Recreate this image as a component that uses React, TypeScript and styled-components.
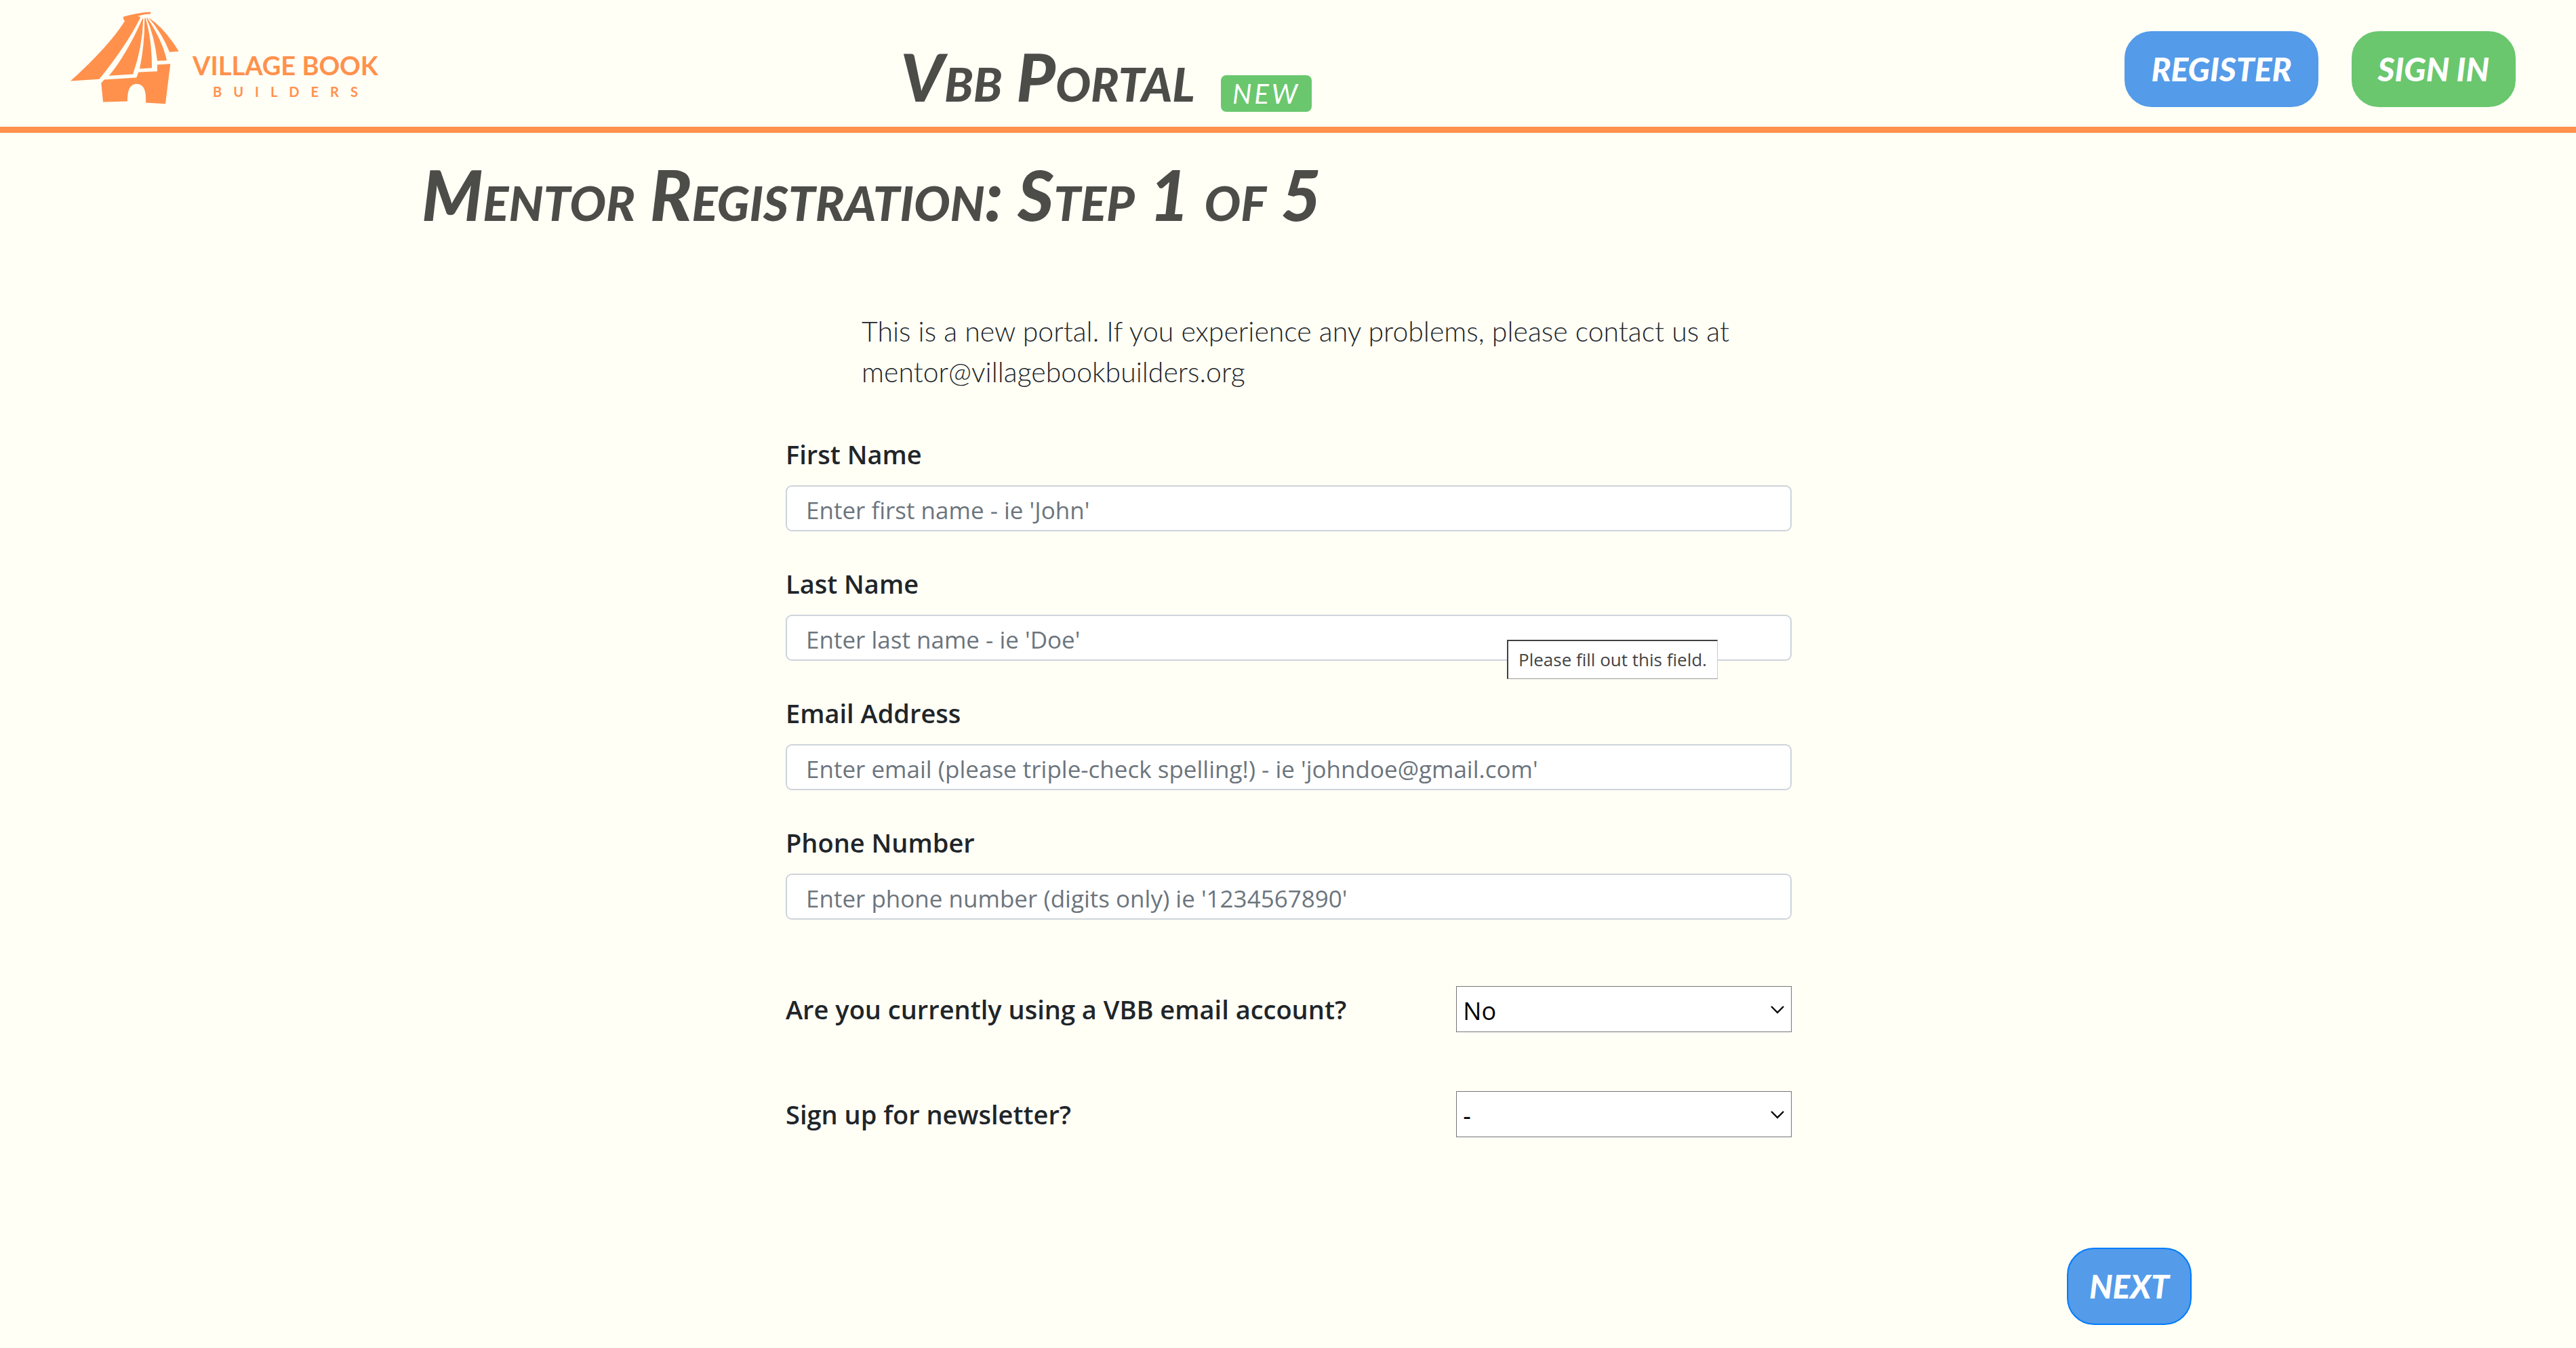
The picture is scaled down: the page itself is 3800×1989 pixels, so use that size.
import React from "react";
import styled, { createGlobalStyle } from "styled-components";

const display = `Lato, "Open Sans", sans-serif`;
const system = `"Open Sans", "Noto Sans", sans-serif`;

const GlobalStyle = createGlobalStyle`
  *, *::before, *::after { box-sizing: border-box; }
  body {
    margin: 0;
    background: #fffff6;
    color: #212529;
    font-family: ${system};
  }
`;

const Header = styled.header`
  display: grid;
  grid-template-columns: 35.8% 1fr auto;
  min-height: 196px;
  padding-right: 89px;
  border-bottom: 9px solid #ff914d;
`;

const LogoLink = styled.a`
  display: flex;
  align-items: flex-start;
  gap: 20px;
  padding: 17px 0 0 104px;
  color: #ff914d;
  text-decoration: none;
`;

const LogoMark = styled.svg`
  width: 160px;
  height: 137px;
  fill: currentColor;
`;

const LogoText = styled.span`
  display: flex;
  flex-direction: column;
  align-items: center;
  padding-top: 55px;
  font-family: ${display};
`;

const LogoName = styled.span`
  font-size: 38px;
  font-weight: 700;
  line-height: 48px;
`;

const LogoTagline = styled.span`
  font-size: 20px;
  font-weight: 700;
  line-height: 30px;
  letter-spacing: 17px;
  padding-left: 17px;
`;

const Brand = styled.div`
  display: flex;
  align-items: flex-start;
  gap: 38px;
`;

const PortalTitle = styled.h1`
  margin: 0;
  padding-top: 52px;
  color: #4c4d48;
  font: italic 900 98px/120px ${display};
  font-variant: small-caps;
  white-space: nowrap;
`;

const Badge = styled.span`
  margin-top: 111px;
  padding: 0 17px;
  border-radius: 8px;
  background: #6ac76e;
  color: #fff;
  font: italic 400 40px/54px ${display};
  letter-spacing: 4px;
`;

const Actions = styled.nav`
  display: flex;
  align-items: flex-start;
  gap: 49px;
  padding-top: 46px;
`;

const PillButton = styled.button<{ $fill: string }>`
  height: 112px;
  padding: 0 37px;
  border: 2px solid ${(p) => p.$fill};
  border-radius: 40px;
  background: ${(p) => p.$fill};
  color: #fff;
  font: italic 900 48px/60px ${display};
  white-space: nowrap;
`;

const NextButton = styled(PillButton)`
  height: 114px;
  padding: 0 31px;
  border-color: #007bff;
`;

const Main = styled.main`
  max-width: 2666px;
  margin: 0 auto;
  padding: 31px 0 34px;
`;

const StepTitle = styled.h2`
  margin: 0 0 112px;
  padding-left: 55px;
  color: #4c4d48;
  font: italic 900 102px/120px ${display};
  font-variant: small-caps;
`;

const Form = styled.form`
  display: flex;
  flex-direction: column;
`;

const Fields = styled.div`
  width: 100%;
  max-width: 1486px;
  margin: 0 auto;
  padding-left: 2px;
`;

const Intro = styled.p`
  margin: 0 0 61px;
  padding: 0 80px 0 112px;
  font: 300 41px/60px ${display};
`;

const Field = styled.div`
  position: relative;
  display: flex;
  flex-direction: column;
  gap: 16px;
  margin-bottom: 47px;
`;

const Label = styled.label`
  font-size: 38px;
  font-weight: 600;
  line-height: 60px;
`;

const TextInput = styled.input`
  width: 100%;
  height: 68px;
  padding: 4px 28px 0;
  border: 2px solid #ced4da;
  border-radius: 9px;
  background: #fff;
  color: #495057;
  font: 400 35px/60px ${system};

  &::placeholder { color: #6c757d; opacity: 1; }
`;

const Tooltip = styled.span`
  position: absolute;
  left: 1064px;
  top: 113px;
  height: 58px;
  padding: 0 15px;
  border: 1px solid #ccc;
  border-width: 2px 1px 1px 2px;
  border-color: #404040 #cccccc #999999 #404040;
  background: #fff;
  color: #444;
  font-size: 26px;
  line-height: 54px;
  white-space: nowrap;
`;

const Questions = styled.div`
  display: flex;
  flex-direction: column;
  gap: 87px;
  padding-top: 51px;
`;

const Question = styled.div`
  display: grid;
  grid-template-columns: 2fr 1fr;
  align-items: center;
`;

const SelectBox = styled.div`
  position: relative;
`;

const Select = styled.select`
  display: block;
  width: 100%;
  height: 68px;
  padding: 6px 9px 0;
  border: 1px solid #767676;
  border-radius: 0;
  appearance: none;
  background: #fff;
  color: #000;
  font: 400 36px/60px ${system};
`;

const Chevron = styled.svg`
  position: absolute;
  right: 10px;
  top: 28px;
  width: 22px;
  height: 14px;
  fill: none;
  stroke: #000;
  stroke-width: 2.4;
  pointer-events: none;
`;

const FormFooter = styled.div`
  display: flex;
  justify-content: flex-end;
  padding-top: 163px;
`;

const textFields = [
  { id: "first-name", label: "First Name", type: "text", placeholder: "Enter first name - ie 'John'" },
  { id: "last-name", label: "Last Name", type: "text", placeholder: "Enter last name - ie 'Doe'", hint: "Please fill out this field." },
  { id: "email", label: "Email Address", type: "email", placeholder: "Enter email (please triple-check spelling!) - ie 'johndoe@gmail.com'" },
  { id: "phone", label: "Phone Number", type: "tel", placeholder: "Enter phone number (digits only) ie '1234567890'" },
];

const questions = [
  { id: "vbb-email", label: "Are you currently using a VBB email account?", options: ["No", "Yes"] },
  { id: "newsletter", label: "Sign up for newsletter?", options: ["-", "Yes", "No"] },
];

function HouseMark() {
  return (
    <LogoMark viewBox="72 50 480 410" aria-hidden="true">
      <path d="M305 73 Q360 56 426 51 L426 60 Q395 61 370 70 L382 75 Q320 200 199 349 L72 357 Q240 205 312 92 Q304 84 305 73Z" />
      <path d="M391 80 L394 82 Q390 210 348 327 L242 334 Q320 240 391 80Z" />
      <path d="M400 79 L404 79 Q432 170 432 299 L378 303 Q400 200 400 79Z" />
      <path d="M408 78 L412 78 Q480 180 498 266 L456 268 Q444 160 408 78Z" />
      <path d="M417 76 Q490 125 551 226 L510 229 Q480 150 417 76Z" />
      <path d="M456 285 L514 281 L492 458 L405 453 Q410 370 364 370 Q322 372 324 447 L216 450 L208 366 L221 351 L364 342 L373 318 L456 314Z" />
    </LogoMark>
  );
}

export default function App() {
  return (
    <>
      <GlobalStyle />
      <Header>
        <LogoLink href="#">
          <HouseMark />
          <LogoText>
            <LogoName>VILLAGE BOOK</LogoName>
            <LogoTagline>BUILDERS</LogoTagline>
          </LogoText>
        </LogoLink>
        <Brand>
          <PortalTitle>Vbb Portal</PortalTitle>
          <Badge>NEW</Badge>
        </Brand>
        <Actions>
          <PillButton type="button" $fill="#549be9">REGISTER</PillButton>
          <PillButton type="button" $fill="#6ac76e">SIGN IN</PillButton>
        </Actions>
      </Header>
      <Main>
        <StepTitle>Mentor Registration: Step 1 of 5</StepTitle>
        <Form>
          <Fields>
            <Intro>
              This is a new portal. If you experience any problems, please contact us at
              mentor@villagebookbuilders.org
            </Intro>
            {textFields.map((f) => (
              <Field key={f.id}>
                <Label htmlFor={f.id}>{f.label}</Label>
                <TextInput id={f.id} type={f.type} placeholder={f.placeholder} />
                {f.hint && <Tooltip role="tooltip">{f.hint}</Tooltip>}
              </Field>
            ))}
            <Questions>
              {questions.map((q) => (
                <Question key={q.id}>
                  <Label htmlFor={q.id}>{q.label}</Label>
                  <SelectBox>
                    <Select id={q.id}>
                      {q.options.map((o) => (
                        <option key={o}>{o}</option>
                      ))}
                    </Select>
                    <Chevron viewBox="0 0 22 14" aria-hidden="true">
                      <path d="M2 2 L11 11 L20 2" />
                    </Chevron>
                  </SelectBox>
                </Question>
              ))}
            </Questions>
          </Fields>
          <FormFooter>
            <NextButton type="submit" $fill="#549be9">NEXT</NextButton>
          </FormFooter>
        </Form>
      </Main>
    </>
  );
}
